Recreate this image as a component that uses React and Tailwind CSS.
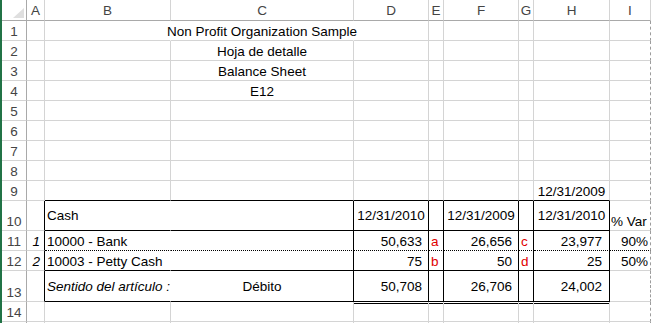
import React from "react";

const COLS = ["A", "B", "C", "D", "E", "F", "G", "H", "I"];
const ROWS = [1, 2, 3, 4, 5, 6, 7, 8, 9, 10, 11, 12, 13, 14, 15];

// cell contents keyed by row + column letter
const cells = {
  "1C": { t: "Non Profit Organization Sample", cls: "justify-center" },
  "2C": { t: "Hoja de detalle", cls: "justify-center" },
  "3C": { t: "Balance Sheet", cls: "justify-center" },
  "4C": { t: "E12", cls: "justify-center" },
  "9H": { t: "12/31/2009", cls: "justify-center" },

  "10B": { t: "Cash", cls: "pl-[2px]", mid: true },
  "10D": { t: "12/31/2010", cls: "justify-center", mid: true },
  "10F": { t: "12/31/2009", cls: "justify-center", mid: true },
  "10H": { t: "12/31/2010", cls: "justify-center", mid: true },
  "10I": { t: "% Var", cls: "pl-[1px]" },

  "11A": { t: "1", cls: "justify-end pr-[4px]", span: "italic" },
  "11B": { t: "10000 - Bank", cls: "pl-[2px]" },
  "11D": { t: "50,633", cls: "justify-end pr-[6px]" },
  "11E": { t: "a", cls: "pl-[2px]", span: "text-[#e00000]" },
  "11F": { t: "26,656", cls: "justify-end pr-[6px]" },
  "11G": { t: "c", cls: "pl-[2px]", span: "text-[#e00000]" },
  "11H": { t: "23,977", cls: "justify-end pr-[7px]" },
  "11I": { t: "90%", cls: "justify-end pr-[2px]" },

  "12A": { t: "2", cls: "justify-end pr-[4px]", span: "italic" },
  "12B": { t: "10003 - Petty Cash", cls: "pl-[2px]" },
  "12D": { t: "75", cls: "justify-end pr-[6px]" },
  "12E": { t: "b", cls: "pl-[2px]", span: "text-[#e00000]" },
  "12F": { t: "50", cls: "justify-end pr-[6px]" },
  "12G": { t: "d", cls: "pl-[2px]", span: "text-[#e00000]" },
  "12H": { t: "25", cls: "justify-end pr-[7px]" },
  "12I": { t: "50%", cls: "justify-end pr-[2px]" },

  "13B": { t: "Sentido del artículo :", cls: "pl-[2px] pt-[2px]", span: "italic", mid: true },
  "13C": { t: "Débito", cls: "justify-center pt-[2px]", mid: true },
  "13D": { t: "50,708", cls: "justify-end pr-[6px] pt-[2px]", mid: true },
  "13F": { t: "26,706", cls: "justify-end pr-[6px] pt-[2px]", mid: true },
  "13H": { t: "24,002", cls: "justify-end pr-[7px] pt-[2px]", mid: true },
};

const borders = (r, col) => {
  let right = "border-r-[#d4d4d4]";
  let bottom = "border-b-[#d4d4d4]";
  let extra = "";
  const inTable = "BCDEFGH".includes(col);

  if (r === 1 && (col === "B" || col === "C")) right = "border-r-transparent";
  if (r >= 10 && r <= 13) {
    if (col === "B") right = "border-r-transparent";
    else if (col !== "I") right = "border-r-black";
  }
  if (col === "I") right = "border-r-[#9c9c9c] [border-right-style:dashed]";

  if (inTable && (r === 9 || r === 10 || r === 12 || r === 13)) bottom = "border-b-black";
  if (r === 11 && col !== "A") bottom = "border-b-black [border-bottom-style:dotted]";
  // second line of the double underline under the totals
  if (r === 14 && "DEFGH".includes(col)) extra = "shadow-[inset_0_1px_0_#fff,inset_0_2px_0_#000]";

  return `${right} ${bottom} ${extra}`;
};

const Cell = ({ r, col }) => {
  const d = cells[`${r}${col}`];
  const v = d?.mid ? "items-center" : "items-end";
  return (
    <div className={`flex min-w-0 ${v} whitespace-nowrap border-r border-b ${borders(r, col)} ${d?.cls ?? ""}`}>
      {d && <span className={d.span ?? ""}>{d.t}</span>}
    </div>
  );
};

const App = () => {
  return (
    <div className="flex h-[323px] w-[651px] overflow-hidden bg-white font-['Liberation_Sans',Arial,sans-serif] text-[13.5px] leading-[16px] text-black">
      <div className="w-[2px] shrink-0 bg-[#217346]"></div>
      <div className="grid grid-cols-[25px_18px_126px_183px_75px_15px_75px_15px_76px_41px] grid-rows-[21px_repeat(9,20px)_30px_20px_20px_31px_20px_2px]">
        {/* corner */}
        <div className="flex items-end justify-end border-r border-b border-r-[#a9a9a9] border-b-[#a9a9a9] pr-[2px] pb-[2px]">
          <svg width="11" height="10" viewBox="0 0 11 10">
            <polygon points="11,0 11,10 0,10" fill="#dfdfdf" />
          </svg>
        </div>
        {COLS.map((c) => (
          <div
            key={c}
            className="flex items-center justify-center border-r border-b border-r-[#d4d4d4] border-b-[#a9a9a9] pt-[2px] text-[#444]"
          >
            {c}
          </div>
        ))}

        {ROWS.map((r) => (
          <React.Fragment key={r}>
            <div className="flex items-end justify-center border-r border-b border-r-[#a9a9a9] border-b-[#d4d4d4] text-[#444]">
              {r < 15 ? r : null}
            </div>
            {COLS.map((c) => (
              <Cell key={c} r={r} col={c} />
            ))}
          </React.Fragment>
        ))}
      </div>
    </div>
  );
};

export default App;
